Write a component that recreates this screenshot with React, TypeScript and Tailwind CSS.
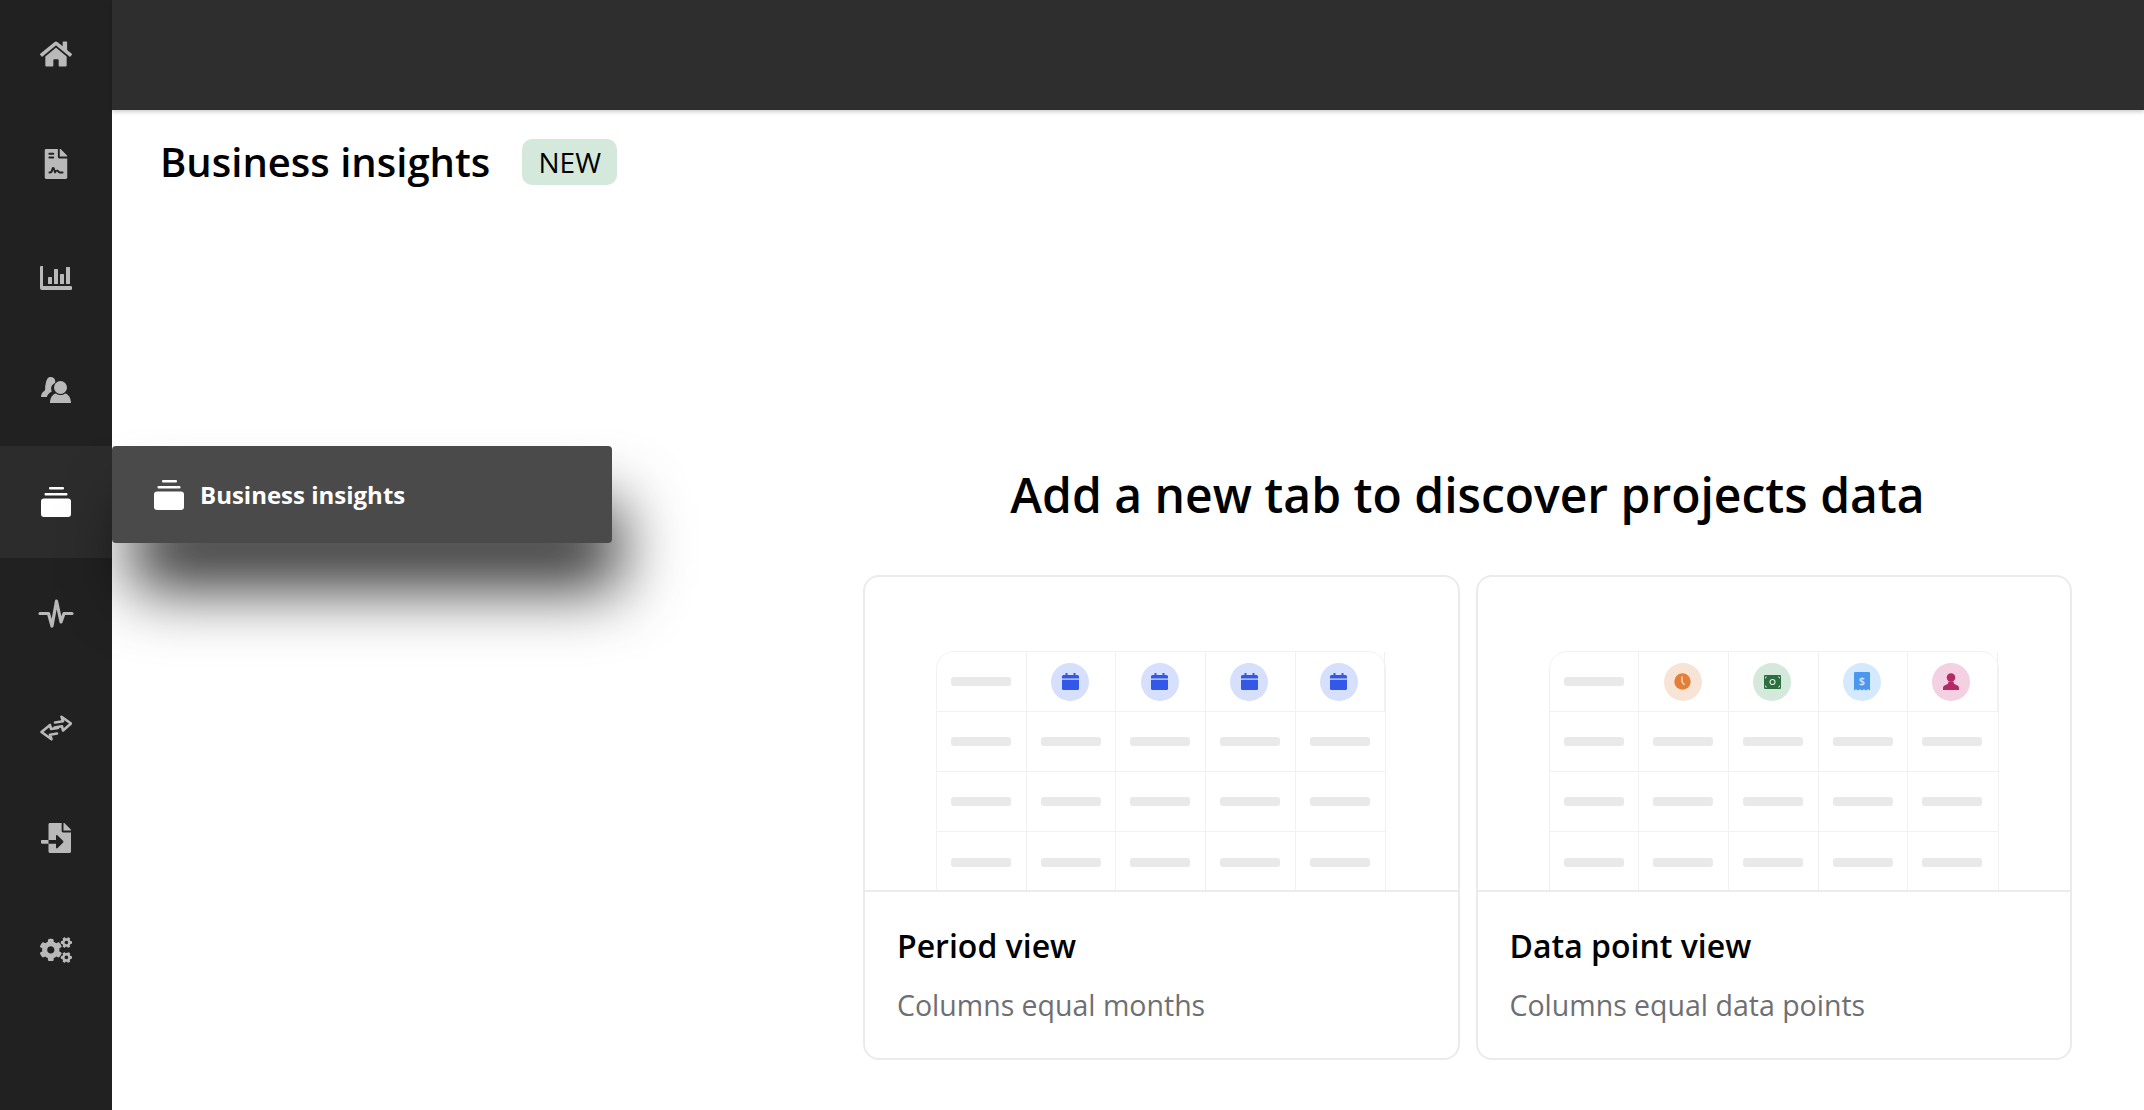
import type { ReactNode } from "react";
import { FaCogs, FaFileContract, FaFileImport, FaHome } from "react-icons/fa";

function ChartIcon() {
  return (
    <svg width="32" height="24" viewBox="0 0 32 24" fill="currentColor">
      <path d="M0 1a1 1 0 0 1 1-1h2v20h28a1 1 0 0 1 1 1v2a1 1 0 0 1-1 1H2a2 2 0 0 1-2-2z" />
      <rect x="8" y="11" width="4" height="7" rx="0.5" />
      <rect x="14" y="3" width="4" height="15" rx="0.5" />
      <rect x="20" y="8" width="4" height="10" rx="0.5" />
      <rect x="26" y="1" width="4" height="17" rx="0.5" />
    </svg>
  );
}

function UsersIcon() {
  return (
    <svg width="30" height="26" viewBox="0 0 30 26" fill="currentColor">
      <path d="M9.500 0c3 0 4.800 2 4.800 4.500 0 .6-.1 1.100-.3 1.600-2.300.9-3.900 3-3.900 5.500 0 1 .3 2 .7 2.900-2.400 1-4.200 3-5 5.500H0c.1-2.400 1-4.300 2.500-5.500l1.500-1.200.2-1.800c-.1-1-.1-2.500.4-4C5.300 2.400 6.900 0 9.500 0z" />
      <circle cx="19.500" cy="10.500" r="6.500" />
      <path d="M9 26c0-5 2.500-9 6-9.500 1.200 1 2.800 1.500 4.500 1.500s3.300-.5 4.500-1.500c3.500.5 6 4.500 6 9.500z" />
    </svg>
  );
}

function StackIcon({ className }: { className?: string }) {
  return (
    <svg width="30" height="30" viewBox="0 0 30 30" fill="currentColor" className={className}>
      <rect x="8" y="0" width="15" height="2.500" rx="1" />
      <rect x="3.500" y="6" width="23" height="2.500" rx="1" />
      <rect x="0" y="11.500" width="30" height="18.500" rx="3" />
    </svg>
  );
}

function PulseIcon() {
  return (
    <svg width="36" height="30" viewBox="0 0 36 30" fill="none" stroke="currentColor" strokeWidth="3.200" strokeLinejoin="round" strokeLinecap="round">
      <path d="M2 14.500h8.500L14 27l4.500-25L23 23l3-8.500h8" />
    </svg>
  );
}

function ExchangeIcon() {
  return (
    <svg width="32" height="26" viewBox="0 0 32 26" fill="none" stroke="currentColor" strokeWidth="2.600" strokeLinejoin="round" strokeLinecap="round">
      <path d="M15 7.500l8-1.300-1.500-4.400L31 8.500l-8 7-1-4.200-7.500 1.200" />
      <path d="M17 18.500l-7 1.200 1.500 4.500L1.500 17l8.500-7 1 4 7-1" />
    </svg>
  );
}

function CalendarIcon() {
  return (
    <svg width="17" height="17" viewBox="0 0 17 17" fill="#3358e8">
      <rect x="3.500" y="0" width="2" height="3.500" />
      <rect x="11.500" y="0" width="2" height="3.500" />
      <path d="M1.500 2h14A1.500 1.500 0 0 1 17 3.500V5.500H0V3.500A1.500 1.500 0 0 1 1.500 2z" />
      <path d="M0 6.800h17v8.700a1.500 1.500 0 0 1-1.500 1.500h-14A1.500 1.500 0 0 1 0 15.500z" />
    </svg>
  );
}

function ClockIcon() {
  return (
    <svg width="17" height="17" viewBox="0 0 17 17">
      <circle cx="8.500" cy="8.500" r="8.200" fill="#e57f37" />
      <path d="M8 3.500v5.300l2.500 3" fill="none" stroke="#f7e3d5" strokeWidth="1.300" />
    </svg>
  );
}

function MoneyIcon() {
  return (
    <svg width="17" height="14" viewBox="0 0 17 14">
      <rect width="17" height="14" rx="1" fill="#2c6e3f" />
      <circle cx="8.500" cy="7" r="2.500" fill="none" stroke="#d4e9dc" strokeWidth="1.200" />
      <path d="M1.500 3.500V2h1.500M14 2h1.500v1.500M1.500 10.500V12h1.500M14 12h1.500v-1.500" fill="none" stroke="#d4e9dc" strokeWidth="0.800" />
    </svg>
  );
}

function ReceiptIcon() {
  return (
    <svg width="16" height="19" viewBox="0 0 16 19">
      <path d="M0 1a1 1 0 0 1 1-1h14a1 1 0 0 1 1 1v17.500l-2-1.200-2 1.200-2-1.200-2 1.200-2-1.200-2 1.200-2-1.200-2 1.200z" fill="#4a97f0" />
      <text x="8" y="12.500" textAnchor="middle" fontSize="11" fontWeight="600" fill="#d5e9fd" fontFamily="'Open Sans', sans-serif">$</text>
    </svg>
  );
}

function PersonIcon() {
  return (
    <svg width="16" height="17" viewBox="0 0 16 17" fill="#b32a67">
      <circle cx="8" cy="4.500" r="4.300" />
      <path d="M5.500 8.500h5l.5 2.200 3.500 1.800c1 .6 1.500 1.500 1.500 2.500v2H0v-2c0-1 .5-1.900 1.500-2.500L5 10.700z" />
    </svg>
  );
}

const navItems: { icon: ReactNode; active?: boolean; shift?: string }[] = [
  { icon: <FaHome size={32} /> },
  { icon: <FaFileContract size={30} />, shift: "pb-[4px]" },
  { icon: <ChartIcon /> },
  { icon: <UsersIcon /> },
  { icon: <StackIcon className="text-white" />, active: true },
  { icon: <PulseIcon /> },
  { icon: <ExchangeIcon />, shift: "pt-[3px]" },
  { icon: <FaFileImport size={30} /> },
  { icon: <FaCogs size={32} /> },
];

const periodHeads = [
  { bg: "bg-[#d6dffb]", icon: <CalendarIcon /> },
  { bg: "bg-[#d6dffb]", icon: <CalendarIcon /> },
  { bg: "bg-[#d6dffb]", icon: <CalendarIcon /> },
  { bg: "bg-[#d6dffb]", icon: <CalendarIcon /> },
];

const dataHeads = [
  { bg: "bg-[#f8e4d6]", icon: <ClockIcon /> },
  { bg: "bg-[#d4e9dc]", icon: <MoneyIcon /> },
  { bg: "bg-[#d5e9fd]", icon: <ReceiptIcon /> },
  { bg: "bg-[#f3d0e2]", icon: <PersonIcon /> },
];

function Bar() {
  return <div className="h-[9px] w-[60px] rounded-[3px] bg-[#e9e9e9]" />;
}

function PreviewTable({ heads }: { heads: { bg: string; icon: ReactNode }[] }) {
  return (
    <div className="mx-auto grid h-[242px] w-[450px] grid-cols-5 grid-rows-4 rounded-t-[18px] border border-[#f1f1f1]">
      <div className="flex items-center border-r border-b border-[#f1f1f1] pl-[14px]">
        <Bar />
      </div>
      {heads.map((h, i) => (
        <div key={i} className="flex items-center justify-center border-r border-b border-[#f1f1f1] pr-[2px] last:border-r-0">
          <div className={`flex h-[38px] w-[38px] items-center justify-center rounded-full ${h.bg}`}>{h.icon}</div>
        </div>
      ))}
      {Array.from({ length: 15 }).map((_, i) => (
        <div
          key={i}
          className={`flex items-center border-[#f1f1f1] pl-[14px] ${i % 5 !== 4 ? "border-r" : ""} ${i < 10 ? "border-b" : ""}`}
        >
          <Bar />
        </div>
      ))}
    </div>
  );
}

function ViewCard({ title, text, heads }: { title: string; text: string; heads: { bg: string; icon: ReactNode }[] }) {
  return (
    <div className="h-[485px] w-[597px] overflow-hidden rounded-[16px] border-2 border-[#ebebeb] bg-white">
      <div className="h-[315px] overflow-hidden border-b-2 border-[#ebebeb] pt-[74px]">
        <PreviewTable heads={heads} />
      </div>
      <div className="px-[32px] pt-[34px]">
        <div className="text-[32px] leading-[40px] font-semibold text-black">{title}</div>
        <div className="mt-[20px] text-[28.500px] leading-[38px] text-[#6f6f73]">{text}</div>
      </div>
    </div>
  );
}

export default function App() {
  return (
    <div className="relative flex h-[1110px] w-[2144px] overflow-hidden bg-white font-['Open_Sans',sans-serif]">
      {/* Sidebar */}
      <nav className="w-[112px] shrink-0 bg-[#212121] text-[#b9b9b9]">
        <div className="-mt-[2px] flex flex-col">
          {navItems.map((item, i) => (
            <div
              key={i}
              className={`flex h-[112px] items-center justify-center ${item.active ? "bg-[#2c2c2c]" : ""} ${item.shift ?? ""}`}
            >
              {item.icon}
            </div>
          ))}
        </div>
      </nav>

      <main className="flex min-w-0 flex-1 flex-col">
        <header className="h-[110px] shrink-0 bg-[#2e2e2e] shadow-[0_2px_4px_rgba(0,0,0,0.2)]" />

        <div className="mt-[29px] flex h-[46px] items-center gap-[32px] pl-[48px]">
          <h1 className="text-[40px] leading-[46px] font-semibold text-black">Business insights</h1>
          <span className="flex h-[46px] w-[95px] items-center justify-center rounded-[10px] bg-[#d4e9dc] text-[28px] text-black">
            NEW
          </span>
        </div>

        <div className="mt-[277px] ml-[751px] flex w-[1209px] flex-col items-center">
          <h2 className="text-[48px] leading-[66px] font-semibold text-black">Add a new tab to discover projects data</h2>
          <div className="mt-[47px] flex w-full gap-[16px]">
            <ViewCard title="Period view" text="Columns equal months" heads={periodHeads} />
            <ViewCard title="Data point view" text="Columns equal data points" heads={dataHeads} />
          </div>
        </div>
      </main>

      {/* Hover flyout */}
      <div className="absolute top-[446px] left-[112px] flex h-[97px] w-[500px] items-center gap-[16px] rounded-[4px] bg-[#4a4a4a] pl-[42px] text-white shadow-[14px_52px_64px_-6px_rgba(0,0,0,0.8)]">
        <StackIcon />
        <span className="text-[24px] font-bold">Business insights</span>
      </div>
    </div>
  );
}
